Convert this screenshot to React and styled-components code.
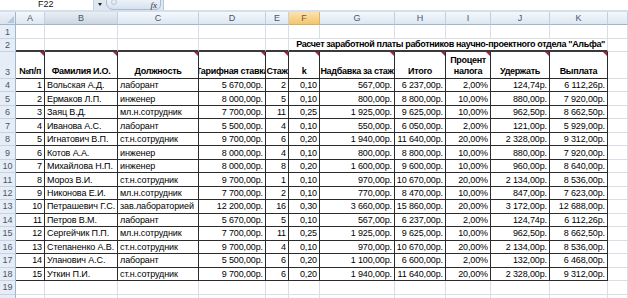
import React from 'react';
import styled, { createGlobalStyle, css } from 'styled-components';

const Global = createGlobalStyle`
  html, body { margin: 0; padding: 0; background: #fff; overflow: hidden; }
  body { font-family: "Liberation Sans", Arial, sans-serif; }
  * { box-sizing: border-box; }
`;

const Page = styled.div`
  width: 628px;
  height: 298px;
  overflow: hidden;
  display: flex;
  flex-direction: column;
  background: #fff;
`;

const FormulaBar = styled.div`
  height: 10px;
  display: flex;
  align-items: stretch;
  background: #dfe7f1;
  border-bottom: 2px solid #d5dfec;
  box-sizing: content-box;
`;

const NameBox = styled.div`
  width: 94px;
  background: #fff;
  font-size: 9px;
  line-height: 8px;
  color: #111;
  padding-left: 38px;
  display: flex;
  align-items: flex-start;
  border-right: 1px solid #c5d2e2;
`;

const DropArrow = styled.div`
  width: 12px;
  display: flex;
  align-items: flex-start;
  justify-content: center;
  padding-top: 3px;
  &::before {
    content: '';
    border-left: 2.5px solid transparent;
    border-right: 2.5px solid transparent;
    border-top: 3px solid #222;
  }
`;

const FxPill = styled.div`
  width: 55px;
  margin-top: -4px;
  border: 1px solid #a9bcd4;
  border-radius: 0 0 5px 7px;
  background: linear-gradient(#f4f7fb, #d6e1ee);
  display: flex;
  align-items: flex-start;
  justify-content: space-between;
  padding: 4px 3px 0 4px;
  font-family: "Liberation Serif", serif;
  font-style: italic;
  font-size: 9px;
  line-height: 8px;
  color: #333;
`;

const Dim = styled.span`
  width: 6px;
  height: 6px;
  border: 1px solid #b8c6d8;
  border-radius: 50%;
  margin-top: -2px;
`;

const FormulaInput = styled.div`
  flex: 1;
  background: #fff;
  margin-left: 2px;
  border-left: 1px solid #b7c6d9;
`;

const cols = [16, 29, 73, 81, 67, 23, 31, 75, 51, 45, 59, 58, 20];

const Sheet = styled.div`
  display: grid;
  grid-template-columns: ${cols.map((c) => c + 'px').join(' ')};
  grid-template-rows: 13px 14px 13px 27px repeat(17, 13.47px);
  font-size: 9px;
  color: #000;
`;

const Corner = styled.div`
  background: linear-gradient(#eef2f8, #d9e2ee);
  border-right: 1px solid #9eb6ce;
  border-bottom: 1px solid #9eb6ce;
  position: relative;
  &::after {
    content: '';
    position: absolute;
    right: 1px;
    bottom: 1px;
    border-left: 7px solid transparent;
    border-bottom: 7px solid #b8c7da;
  }
`;

const ColHead = styled.div`
  background: ${(p) =>
    p.$active
      ? 'linear-gradient(#fbe3b3, #f2c66c)'
      : p.$hover
      ? 'linear-gradient(#e9eef4, #ccd6e2)'
      : 'linear-gradient(#f5f8fc, #dde6f1)'};
  border-right: 1px solid ${(p) => (p.$active ? '#e3b25a' : '#c2d0e0')};
  border-bottom: 1px solid ${(p) => (p.$active ? '#e0ad4f' : '#9eb6ce')};
  color: ${(p) => (p.$active ? '#7a5a28' : '#46566b')};
  font-size: 9px;
  display: flex;
  align-items: center;
  justify-content: center;
`;

const RowHead = styled.div`
  background: #e6edf6;
  border-right: 1px solid #9eb6ce;
  border-bottom: 1px solid #c5d3e3;
  color: #46566b;
  font-size: 9px;
  display: flex;
  align-items: ${(p) => (p.$tall ? 'flex-end' : 'center')};
  justify-content: center;
  padding-bottom: ${(p) => (p.$tall ? '1px' : '0')};
`;

const Cell = styled.div`
  position: relative;
  display: flex;
  align-items: center;
  white-space: nowrap;
  overflow: hidden;
  padding: 0 2px;
  letter-spacing: -0.12px;
  border-right: 1px solid #dadee4;
  border-bottom: 1px solid #dadee4;
  justify-content: ${(p) =>
    p.$align === 'right' ? 'flex-end' : p.$align === 'center' ? 'center' : 'flex-start'};
  ${(p) =>
    p.$boxed &&
    css`
      border-right-color: #2b2b2b;
      border-bottom-color: #2b2b2b;
    `}
  ${(p) =>
    p.$thickBottom &&
    css`
      border-bottom: 2px solid #3a3a3a;
    `}
  ${(p) =>
    p.$span &&
    css`
      grid-column: span ${p.$span};
      overflow: visible;
    `}
`;

const Title = styled(Cell)`
  font-weight: bold;
  letter-spacing: -0.35px;
  align-items: flex-end;
  padding-bottom: 1px;
`;

const HeadCell = styled(Cell)`
  font-weight: bold;
  letter-spacing: -0.3px;
  align-items: flex-end;
  text-align: center;
  white-space: ${(p) => (p.$wrap ? 'normal' : 'nowrap')};
  line-height: 11px;
  padding: 0 0 1px 0;
  justify-content: center;
  border-right-color: #2b2b2b;
  border-bottom-color: #2b2b2b;
  &::after {
    content: '';
    position: absolute;
    top: 0;
    right: 0;
    border-left: 4px solid transparent;
    border-top: 4px solid #b0243a;
  }
`;

const letters = ['A', 'B', 'C', 'D', 'E', 'F', 'G', 'H', 'I', 'J', 'K', ''];

const headers = [
  '№п/п',
  'Фамилия И.О.',
  'Должность',
  'Тарифная ставка',
  'Стаж',
  'k',
  'Надбавка за стаж',
  'Итого',
  'Процент налога',
  'Удержать',
  'Выплата',
];

const aligns = ['right', 'left', 'left', 'right', 'right', 'right', 'right', 'right', 'right', 'right', 'right'];

const rows = [
  [1, 'Вольская А.Д.', 'лаборант', '5 670,00р.', 2, '0,10', '567,00р.', '6 237,00р.', '2,00%', '124,74р.', '6 112,26р.'],
  [2, 'Ермаков Л.П.', 'инженер', '8 000,00р.', 5, '0,10', '800,00р.', '8 800,00р.', '10,00%', '880,00р.', '7 920,00р.'],
  [3, 'Заяц В.Д.', 'мл.н.сотрудник', '7 700,00р.', 11, '0,25', '1 925,00р.', '9 625,00р.', '10,00%', '962,50р.', '8 662,50р.'],
  [4, 'Иванова А.С.', 'лаборант', '5 500,00р.', 4, '0,10', '550,00р.', '6 050,00р.', '2,00%', '121,00р.', '5 929,00р.'],
  [5, 'Игнатович В.П.', 'ст.н.сотрудник', '9 700,00р.', 6, '0,20', '1 940,00р.', '11 640,00р.', '20,00%', '2 328,00р.', '9 312,00р.'],
  [6, 'Котов А.А.', 'инженер', '8 000,00р.', 4, '0,10', '800,00р.', '8 800,00р.', '10,00%', '880,00р.', '7 920,00р.'],
  [7, 'Михайлова Н.П.', 'инженер', '8 000,00р.', 8, '0,20', '1 600,00р.', '9 600,00р.', '10,00%', '960,00р.', '8 640,00р.'],
  [8, 'Мороз В.И.', 'ст.н.сотрудник', '9 700,00р.', 1, '0,10', '970,00р.', '10 670,00р.', '20,00%', '2 134,00р.', '8 536,00р.'],
  [9, 'Никонова Е.И.', 'мл.н.сотрудник', '7 700,00р.', 2, '0,10', '770,00р.', '8 470,00р.', '10,00%', '847,00р.', '7 623,00р.'],
  [10, 'Петрашевич Г.С.', 'зав.лабораторией', '12 200,00р.', 16, '0,30', '3 660,00р.', '15 860,00р.', '20,00%', '3 172,00р.', '12 688,00р.'],
  [11, 'Петров В.М.', 'лаборант', '5 670,00р.', 5, '0,10', '567,00р.', '6 237,00р.', '2,00%', '124,74р.', '6 112,26р.'],
  [12, 'Сергейчик П.П.', 'мл.н.сотрудник', '7 700,00р.', 11, '0,25', '1 925,00р.', '9 625,00р.', '10,00%', '962,50р.', '8 662,50р.'],
  [13, 'Степаненко А.В.', 'ст.н.сотрудник', '9 700,00р.', 4, '0,10', '970,00р.', '10 670,00р.', '20,00%', '2 134,00р.', '8 536,00р.'],
  [14, 'Уланович А.С.', 'лаборант', '5 500,00р.', 6, '0,20', '1 100,00р.', '6 600,00р.', '2,00%', '132,00р.', '6 468,00р.'],
  [15, 'Уткин П.И.', 'ст.н.сотрудник', '9 700,00р.', 6, '0,20', '1 940,00р.', '11 640,00р.', '20,00%', '2 328,00р.', '9 312,00р.'],
];

const nb = (v) => String(v).replace(/ /g, '\u00a0');

export default function App() {
  return (
    <Page>
      <Global />
      <FormulaBar>
        <NameBox>F22</NameBox>
        <DropArrow />
        <FxPill>
          <Dim />
          <span>fx</span>
        </FxPill>
        <FormulaInput />
      </FormulaBar>
      <Sheet>
        <Corner />
        {letters.map((l, i) => (
          <ColHead key={i} $active={l === 'F'} $hover={l === 'B'}>
            {l}
          </ColHead>
        ))}

        <RowHead>1</RowHead>
        {letters.map((_, i) => (
          <Cell key={'r1' + i} />
        ))}

        <RowHead>2</RowHead>
        {[0, 1, 2, 3, 4].map((i) => (
          <Cell key={'r2' + i} $thickBottom />
        ))}
        <Title $span={6} $align="right" $thickBottom>
          {'Расчет заработной платы работников научно-проектного отдела "Альфа"'}
        </Title>
        <Cell />

        <RowHead $tall>3</RowHead>
        {headers.map((h, i) => (
          <HeadCell key={'h' + i} $wrap={i === 8}>
            {h}
          </HeadCell>
        ))}
        <Cell />

        {rows.map((r, ri) => (
          <React.Fragment key={'row' + ri}>
            <RowHead>{ri + 4}</RowHead>
            {r.map((v, ci) => (
              <Cell key={ci} $boxed $align={aligns[ci]}>
                {nb(v)}
              </Cell>
            ))}
            <Cell />
          </React.Fragment>
        ))}

        {[19, 20].map((n) => (
          <React.Fragment key={'e' + n}>
            <RowHead>{n}</RowHead>
            {letters.map((_, i) => (
              <Cell key={i} />
            ))}
          </React.Fragment>
        ))}
      </Sheet>
    </Page>
  );
}
